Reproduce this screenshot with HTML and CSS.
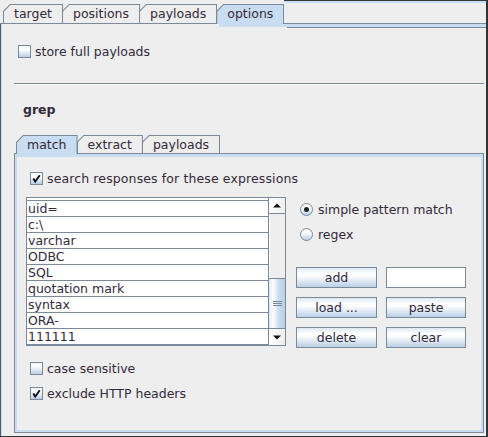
FILE: index.html
```html
<!DOCTYPE html>
<html>
<head>
<meta charset="utf-8">
<link rel="stylesheet" href="styles.css">
</head>
<body>
<div class="window">
  <div class="tabrow">
    <div class="tab"><span class="lbl">target</span></div>
    <div class="tab"><span class="lbl">positions</span></div>
    <div class="tab"><span class="lbl">payloads</span></div>
    <div class="tab sel"><span class="lbl">options</span></div>
    <div class="tabfill"></div>
  </div>
  <div class="content">
    <div class="band"><div class="band-gap"></div><div class="band-sel"></div><div class="band-rest"></div></div>
    <div class="check c-store"><span class="box"></span><span>store full payloads</span></div>
    <div class="sep"></div>
    <div class="grep">grep</div>
    <div class="inner">
      <div class="tabrow2">
        <div class="tab2 sel"><span class="lbl">match</span></div>
        <div class="tab2"><span class="lbl">extract</span></div>
        <div class="tab2"><span class="lbl">payloads</span></div>
      </div>
      <div class="pane">
        <div class="pane-in">
          <div class="check c-search"><span class="box"><svg class="tick" width="11" height="11" viewBox="0 0 11 11"><path d="M2.3 5.6 L4.2 8.6 L8.8 2.2" fill="none" stroke="#111" stroke-width="1.9"/></svg></span><span>search responses for these expressions</span></div>
          <div class="work">
            <div class="list">
              <div class="rows">
                <div class="row partial"></div>
                <div class="row">uid=</div>
                <div class="row">c:\</div>
                <div class="row">varchar</div>
                <div class="row">ODBC</div>
                <div class="row">SQL</div>
                <div class="row">quotation mark</div>
                <div class="row">syntax</div>
                <div class="row">ORA-</div>
                <div class="row">111111</div>
              </div>
              <div class="sbar">
                <div class="sbtn up"><svg width="8" height="5" viewBox="0 0 8 5"><polygon points="0,4.5 4,0.5 8,4.5" fill="#111"/></svg></div>
                <div class="track"></div>
                <div class="thumb"><svg width="9" height="5" viewBox="0 0 9 5"><path d="M0 0.5H9M0 2.5H9M0 4.5H9" stroke="#7a8a99" stroke-width="1"/></svg></div>
                <div class="sbtn down"><svg width="8" height="5" viewBox="0 0 8 5"><polygon points="0,0.5 4,4.5 8,0.5" fill="#111"/></svg></div>
              </div>
            </div>
            <div class="side">
              <div class="radio r1"><span class="dot on"></span><span>simple pattern match</span></div>
              <div class="radio r2"><span class="dot"></span><span>regex</span></div>
              <div class="btns">
                <button class="btn">add</button>
                <div class="field"></div>
                <button class="btn">load ...</button>
                <button class="btn">paste</button>
                <button class="btn">delete</button>
                <button class="btn">clear</button>
              </div>
            </div>
          </div>
          <div class="check c-case"><span class="box"></span><span>case sensitive</span></div>
          <div class="check c-excl"><span class="box"><svg class="tick" width="11" height="11" viewBox="0 0 11 11"><path d="M2.3 5.6 L4.2 8.6 L8.8 2.2" fill="none" stroke="#111" stroke-width="1.9"/></svg></span><span>exclude HTTP headers</span></div>
        </div>
      </div>
    </div>
  </div>
</div>
</body>
</html>
```

FILE: styles.css
```css
html, body {
  margin: 0;
  padding: 0;
  background: #eeeeee;
}
body {
  font-family: "DejaVu Sans", "Liberation Sans", sans-serif;
  font-size: 12.5px;
  color: #332a3a;
}
.window {
  width: 488px;
  height: 437px;
  box-sizing: border-box;
  border-right: 2px solid #333;
  border-bottom: 1px solid #333;
  background: #eeeeee;
  overflow: hidden;
  display: flex;
  flex-direction: column;
}

/* outer tabs */
.tabrow {
  display: flex;
  align-items: flex-end;
  height: 24px;
  flex: none;
  padding-left: 3px;
  background: linear-gradient(#7a8a99, #7a8a99) left bottom / 100% 1px no-repeat;
}
.tab, .tab2 {
  box-sizing: border-box;
  padding: 1px 1px 1px 1px;
  background: #7a8a99;
  clip-path: polygon(0 7px, 7px 0, 100% 0, 100% 100%, 0 100%);
  white-space: nowrap;
}
.tab { height: 20px; }
.tab + .tab, .tab2 + .tab2 { margin-left: -1px; }
.tab .lbl, .tab2 .lbl {
  display: block;
  padding: 0 10px;
  background: #eeeeee;
  clip-path: polygon(0 6.5px, 6.5px 0, 100% 0, 100% 100%, 0 100%);
}
.tab .lbl { height: 18px; line-height: 18px; }
.tab.sel, .tab2.sel { padding-bottom: 0; }
.tab.sel .lbl { height: 19px; background: #c8ddf2; }
.tabfill {
  flex: 1;
  align-self: stretch;
  background: linear-gradient(to bottom, #3a3a3a 0 1px, #c8ddf2 1px 3px, transparent 3px);
}

.content {
  flex: 1;
  border-left: 1px solid #4e5a66;
  box-shadow: inset 1px 0 #c8ddf2;
}
.band {
  display: flex;
  height: 4px;
}
.band-gap { width: 218px; }
.band-sel { width: 68px; height: 3px; background: #c8ddf2; }
.band-rest {
  flex: 1;
  height: 3px;
  background: #c8ddf2;
  border-bottom: 1px solid #7a8a99;
}

/* checkboxes */
.check {
  display: flex;
  align-items: center;
  gap: 4px;
  height: 13px;
  line-height: 13px;
  white-space: nowrap;
}
.box {
  flex: none;
  width: 13px;
  height: 13px;
  box-sizing: border-box;
  border: 1px solid #7a8a99;
  background: linear-gradient(#f2f6fa, #ffffff 30%, #dde8f3 65%, #b8cfe5);
  display: flex;
  align-items: center;
  justify-content: center;
}
.c-store { margin: 17px 0 0 17px; }
.sep {
  margin: 25px 0 0 13px;
  width: 470px;
  height: 1px;
  background: #7a8a99;
  border-bottom: 1px solid #ffffff;
}
.grep {
  margin: 17px 0 0 22px;
  font-weight: bold;
  line-height: 15px;
}

/* inner tabbed pane */
.inner {
  margin: 18px 0 0 13px;
  width: 470px;
}
.tabrow2 {
  display: flex;
  align-items: flex-end;
  height: 19px;
  padding-left: 2px;
  background: linear-gradient(#7a8a99, #7a8a99) left bottom / 100% 1px no-repeat;
}
.tab2 { height: 19px; }
.tab2 .lbl { height: 17px; line-height: 17px; }
.tab2.sel .lbl { height: 18px; background: #c8ddf2; }
.pane {
  border: 1px solid #7a8a99;
  border-top: none;
}
.pane-in {
  border: solid #c8ddf2;
  border-width: 3px 2px 2px 2px;
  height: 273px;
}
.c-search { margin: 15px 0 0 13px; letter-spacing: 0.12px; }
.work {
  display: flex;
  gap: 10px;
  height: 149px;
  margin: 12px 0 0 9px;
}

/* list */
.list {
  display: flex;
  width: 260px;
  height: 149px;
  box-sizing: border-box;
  border: 1px solid #7a8a99;
  background: #ffffff;
  flex: none;
}
.rows {
  width: 242px;
  box-sizing: border-box;
  border-right: 1px solid #7a8a99;
}
.row {
  height: 16px;
  box-sizing: border-box;
  border-bottom: 1px solid #7a8a99;
  line-height: 15px;
  padding-left: 1px;
  white-space: nowrap;
}
.row.partial { height: 3px; }
.sbar {
  width: 16px;
  display: flex;
  flex-direction: column;
  background: #eeeeee;
}
.sbtn {
  display: flex;
  align-items: center;
  justify-content: center;
  box-sizing: border-box;
  background: linear-gradient(to right, #ffffff, #eeeeee);
}
.sbtn.up { height: 16px; border-bottom: 1px solid #7a8a99; }
.sbtn.down { height: 17px; border-top: 1px solid #7a8a99; }
.track { height: 64px; border-left: 1px solid #ffffff; }
.thumb {
  height: 50px;
  box-sizing: border-box;
  border-top: 1px solid #7a8a99;
  background: linear-gradient(to right, #dde8f3, #ffffff 25%, #c8ddf2 60%, #b8cfe5);
  display: flex;
  align-items: center;
  justify-content: center;
}

/* right side */
.side { width: 170px; flex: none; }
.radio {
  display: flex;
  align-items: center;
  gap: 5px;
  height: 13px;
  line-height: 13px;
  margin-left: 4px;
  white-space: nowrap;
}
.r1 { margin-top: 6px; }
.r2 { margin-top: 12px; }
.dot {
  flex: none;
  width: 13px;
  height: 13px;
  box-sizing: border-box;
  border-radius: 50%;
  border: 1px solid #7a8a99;
  background: linear-gradient(#f2f6fa, #ffffff 30%, #dde8f3 65%, #b8cfe5);
  display: flex;
  align-items: center;
  justify-content: center;
}
.dot.on::after {
  content: "";
  width: 5px;
  height: 5px;
  border-radius: 50%;
  background: #222;
}
.btns {
  margin-top: 26px;
  display: grid;
  grid-template-columns: 81px 80px;
  grid-auto-rows: 21px;
  column-gap: 9px;
  row-gap: 9px;
}
.btn {
  margin: 0;
  padding: 0;
  box-sizing: border-box;
  height: 21px;
  border: 1px solid #7a8a99;
  background: linear-gradient(#dde8f3, #ffffff 30%, #ffffff 40%, #dde8f3 70%, #b8cfe5);
  font: inherit;
  color: #332a3a;
  line-height: 19px;
  text-align: center;
}
.field {
  box-sizing: border-box;
  height: 21px;
  border: 1px solid #7a8a99;
  background: #ffffff;
}
.c-case { margin: 16px 0 0 13px; }
.c-excl { margin: 12px 0 0 13px; }
```
